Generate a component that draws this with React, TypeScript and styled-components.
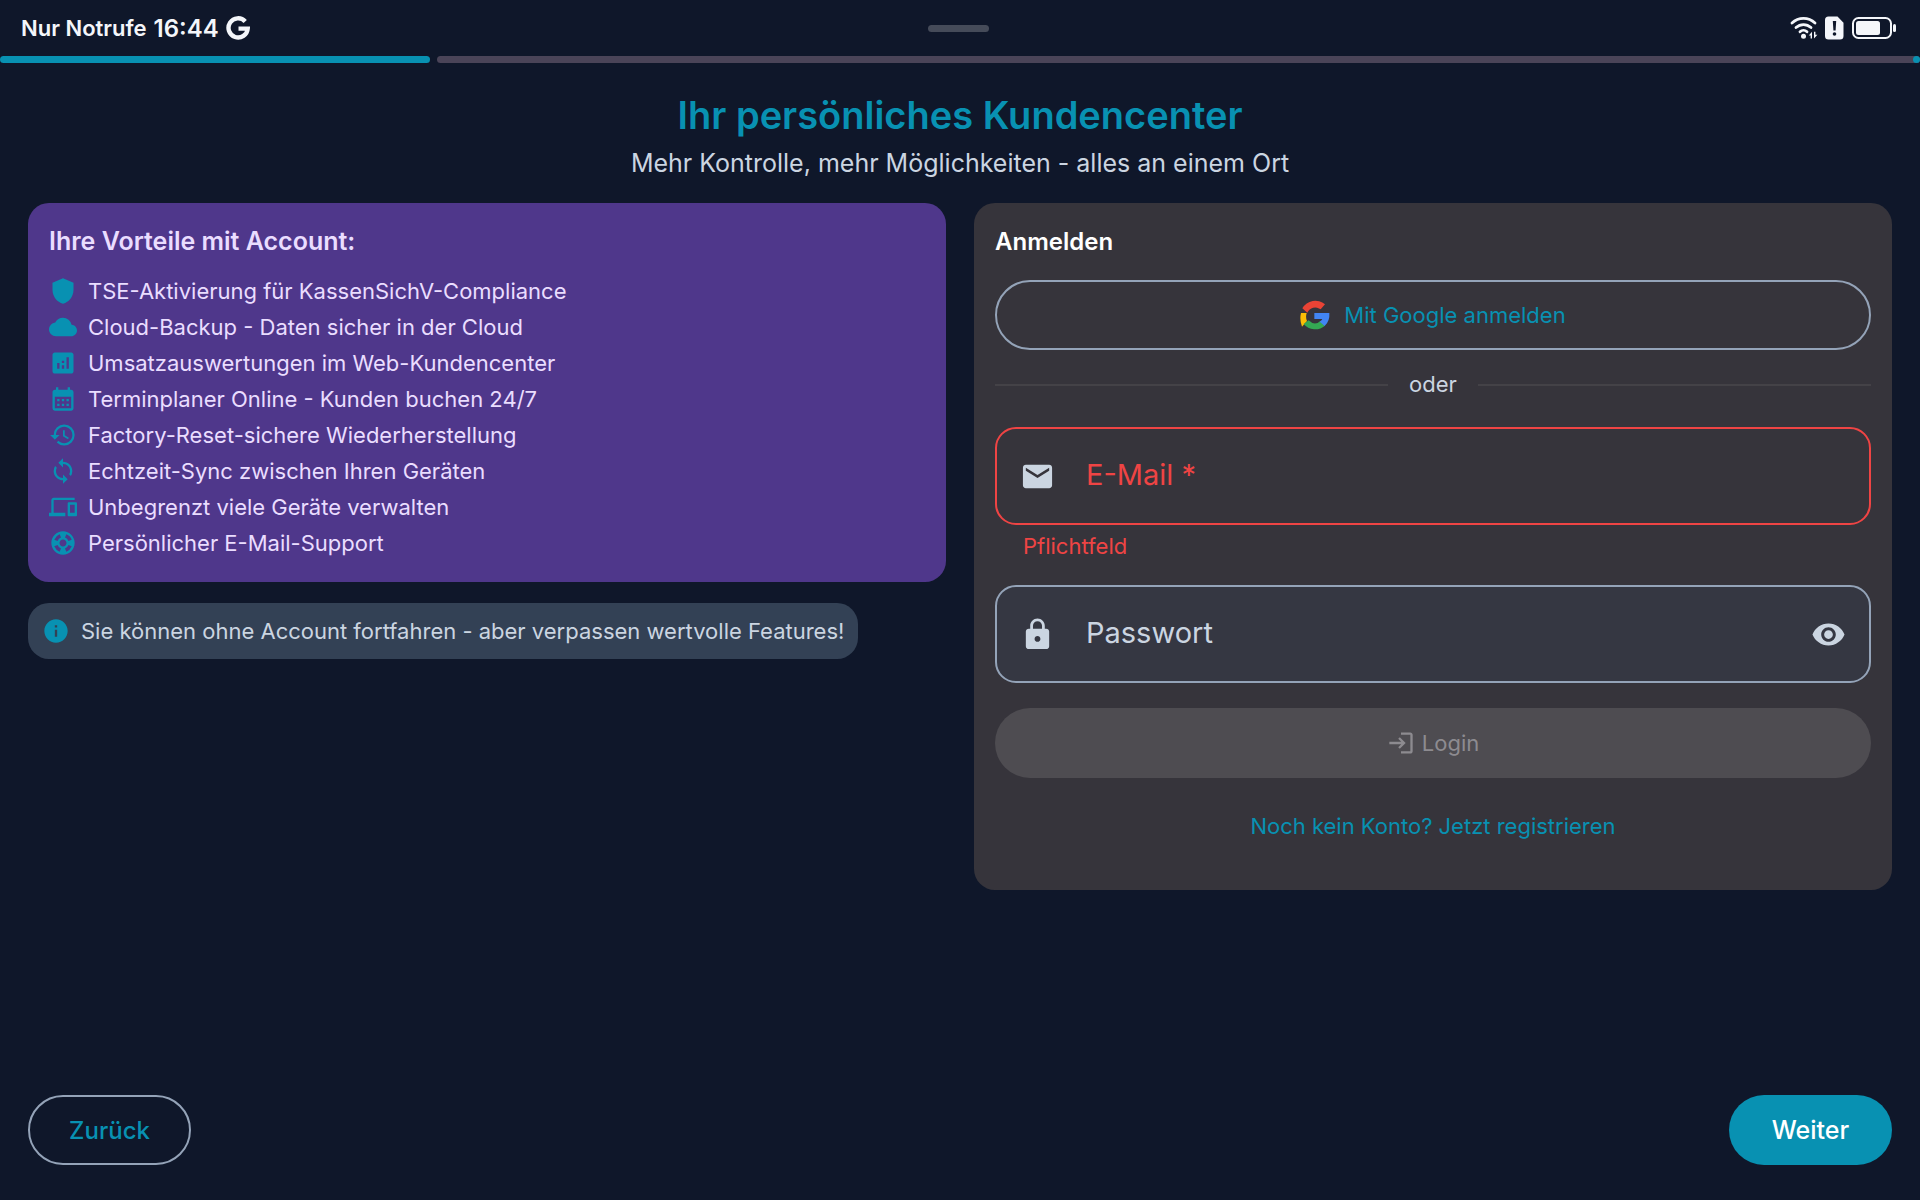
import React, { useState } from "react";
import styled, { createGlobalStyle } from "styled-components";
import {
  MdShield, MdCloud, MdAnalytics, MdCalendarMonth, MdHistory, MdSync, MdDevices,
  MdSupport, MdInfo, MdEmail, MdLock, MdVisibility, MdLogin,
} from "react-icons/md";

const color = {
  bg: "#0f172a",
  primary: "#0891b2",
  purple: "#4f378b",
  onPurple: "#eaddff",
  card: "#36343b",
  text: "#cbd5e1",
  outline: "#94a3b8",
  slate: "#334155",
  error: "#ef4444",
  track: "#4a4458",
};

const GlobalStyle = createGlobalStyle`
  * { box-sizing: border-box; }
  body {
    margin: 0;
    background: ${color.bg};
    font-family: "Inter", "Noto Sans", sans-serif;
    color: ${color.text};
  }
  h1, h2, p, ul { margin: 0; padding: 0; }
  button, input { font: inherit; }
  svg { display: block; flex: none; }
`;

const Page = styled.div`
  min-height: 100vh;
  display: flex;
  flex-direction: column;
`;

const StatusBar = styled.header`
  display: grid;
  grid-template-columns: 1fr auto 1fr;
  align-items: center;
  height: 56px;
  padding: 0 24px 0 21px;
  color: #f4f6fa;
  font-size: 22px;
  font-weight: 600;
`;

const StatusGroup = styled.div<{ $end?: boolean }>`
  display: flex;
  align-items: center;
  gap: 7px;
  justify-content: ${(p) => (p.$end ? "flex-end" : "flex-start")};
`;

const Clock = styled.span`
  font-size: 24px;
`;

const Handle = styled.div`
  width: 61px;
  height: 7px;
  border-radius: 4px;
  background: #454b59;
`;

const Progress = styled.div`
  display: flex;
  gap: 7px;
  height: 7px;
`;

const ProgressDone = styled.div`
  border-radius: 4px;
  background: ${color.primary};
`;

const ProgressRest = styled.div`
  flex: 1;
  display: flex;
  justify-content: flex-end;
  border-radius: 4px;
  background: ${color.track};
`;

const ProgressStop = styled.span`
  width: 7px;
  height: 7px;
  border-radius: 50%;
  background: ${color.primary};
`;

const Main = styled.main`
  flex: 1;
  padding: 28px 28px 0;
`;

const Intro = styled.div`
  text-align: center;
  margin-bottom: 19px;
`;

const Title = styled.h1`
  font-size: 38px;
  line-height: 48px;
  font-weight: 600;
  color: ${color.primary};
`;

const Subtitle = styled.p`
  font-size: 25px;
  line-height: 42px;
  margin-top: 3px;
`;

const Columns = styled.div`
  display: grid;
  grid-template-columns: 1fr 1fr;
  gap: 28px;
  align-items: start;
`;

const Column = styled.div`
  display: flex;
  flex-direction: column;
  align-items: flex-start;
  gap: 21px;
`;

const Card = styled.section<{ $tone: "purple" | "surface" }>`
  width: 100%;
  padding: 21px;
  border-radius: 21px;
  background: ${(p) => (p.$tone === "purple" ? color.purple : color.card)};
  color: ${(p) => (p.$tone === "purple" ? color.onPurple : color.text)};
`;

const CardTitle = styled.h2<{ $bright?: boolean }>`
  font-size: ${(p) => (p.$bright ? "24px" : "25px")};
  line-height: 35px;
  font-weight: 600;
  margin-bottom: ${(p) => (p.$bright ? "21px" : "14px")};
  color: ${(p) => (p.$bright ? "#ffffff" : "inherit")};
`;

const Benefits = styled.ul`
  list-style: none;
`;

const Benefit = styled.li`
  display: flex;
  align-items: center;
  gap: 11px;
  height: 36px;
  font-size: 22px;
  line-height: 28px;

  svg { color: ${color.primary}; }
`;

const Notice = styled.p`
  display: flex;
  align-items: center;
  gap: 11px;
  padding: 14px;
  border-radius: 21px;
  background: ${color.slate};
  font-size: 22px;
  line-height: 28px;

  svg { color: ${color.primary}; }
`;

const Button = styled.button<{ $kind: "outlined" | "filled"; $wide?: boolean }>`
  display: flex;
  align-items: center;
  justify-content: center;
  width: ${(p) => (p.$wide ? "100%" : "auto")};
  min-width: 163px;
  height: 70px;
  padding: 0 39px;
  border-radius: 35px;
  border: 2px solid ${(p) => (p.$kind === "outlined" ? color.outline : "transparent")};
  background: ${(p) => (p.$kind === "outlined" ? "transparent" : color.primary)};
  background-clip: border-box;
  background-origin: border-box;
  color: ${(p) => (p.$kind === "outlined" ? color.primary : "#ffffff")};
  font-size: ${(p) => (p.$wide ? "22px" : p.$kind === "outlined" ? "24px" : "25px")};
  font-weight: ${(p) => (p.$wide ? 400 : 500)};
  gap: ${(p) => (p.$kind === "outlined" ? "14px" : "7px")};
  cursor: pointer;

  &:disabled {
    background: #4e4c51;
    color: #8d8b90;
    cursor: default;
  }
`;

const Divider = styled.div`
  display: flex;
  align-items: center;
  gap: 21px;
  margin: 14px 0 22px;
  font-size: 22px;
  line-height: 41px;

  &::before,
  &::after {
    content: "";
    flex: 1;
    height: 2px;
    background: #444247;
  }
`;

const Field = styled.div<{ $error?: boolean }>`
  display: flex;
  align-items: center;
  height: 98px;
  padding: 0 23px;
  border: 2px solid ${(p) => (p.$error ? color.error : color.outline)};
  border-radius: 21px;
  background: ${(p) => (p.$error ? "transparent" : "#353742")};
`;

const FieldLabel = styled.label<{ $error?: boolean }>`
  margin-left: 31px;
  padding-bottom: 4px;
  font-size: 29px;
  color: ${(p) => (p.$error ? color.error : color.text)};
`;

const FieldInput = styled.input`
  flex: 1;
  min-width: 0;
  height: 100%;
  margin-left: 14px;
  padding: 0;
  border: 0;
  outline: 0;
  background: transparent;
  color: ${color.text};
  font-size: 29px;
`;

const IconButton = styled.button`
  padding: 0;
  border: 0;
  background: none;
  color: inherit;
  cursor: pointer;
`;

const Hint = styled.p`
  padding: 4px 28px 0;
  margin-bottom: 22px;
  font-size: 22px;
  line-height: 34px;
  color: ${color.error};
`;

const Actions = styled.div`
  display: flex;
  flex-direction: column;
  align-items: center;
  gap: 28px;
  padding: 25px 0 23px;
`;

const RegisterLink = styled.a`
  font-size: 22px;
  line-height: 40px;
  color: ${color.primary};
  text-decoration: none;
`;

const Footer = styled.footer`
  display: flex;
  justify-content: space-between;
  padding: 28px 28px 35px;
`;

const GoogleMono = () => (
  <svg width="24" height="24" viewBox="0 0 24 24" fill="none" stroke="currentColor" strokeWidth="4.4" aria-hidden="true">
    <path d="M19.2 5.4A9.6 9.6 0 1 0 21.7 12.6H12.5" />
  </svg>
);

const GoogleColor = () => (
  <svg width="30" height="32" viewBox="0 0 90 96" aria-hidden="true">
    <path fill="#ea4335" d="M7 28A45 45 0 0 1 75 16L62 31A26 26 0 0 0 22 41Z" />
    <path fill="#fbbc05" d="M3 42H20Q16 55 21 66L6 83Q-2 62 3 42Z" />
    <path fill="#34a853" d="M11 75L26 64Q44 82 61 66L75 80A45 45 0 0 1 11 75Z" />
    <path fill="#4285f4" d="M43 42H88Q90 66 74 81L59 68Q66 64 67 60H43Z" />
  </svg>
);

const WifiIcon = () => (
  <svg width="28" height="24" viewBox="0 0 28 24" fill="none" stroke="currentColor" strokeWidth="2.8" strokeLinecap="round" aria-hidden="true">
    <path d="M2 7C8.5.8 18.5.8 25 7" />
    <path d="M6 11.600c4.400-4.100 10.600-4.100 15 0" />
    <path d="M10 15.800c2-1.900 5-1.900 7 0" />
    <circle cx="13.500" cy="20.300" r="2.500" fill="currentColor" stroke="none" />
    <path d="M22 15.800V22.500h-1.400V19.600H18.800zM24 15.800h1.400v2.900h2L24 22.500z" fill="currentColor" stroke="none" />
  </svg>
);

const SimIcon = () => (
  <svg width="19" height="24" viewBox="0 0 19 24" aria-hidden="true">
    <path fill="currentColor" d="M3.5.5h9l6 6.200V20a3.500 3.500 0 0 1-3.500 3.500H3.500A3.500 3.500 0 0 1 0 20V4A3.500 3.500 0 0 1 3.500.5z" />
    <path fill={color.bg} d="M7.800 5h3.400l-.6 9.500H8.400z" />
    <circle cx="9.500" cy="18" r="1.800" fill={color.bg} />
  </svg>
);

const BatteryIcon = () => (
  <svg width="45" height="24" viewBox="0 0 45 24" aria-hidden="true">
    <rect x="2" y="2" width="38" height="20" rx="5.500" fill="none" stroke="currentColor" strokeWidth="2" />
    <rect x="5" y="5" width="24" height="14" rx="2.500" fill="currentColor" />
    <rect x="42" y="8" width="3" height="8" rx="1.500" fill="currentColor" />
  </svg>
);

const benefits = [
  { icon: MdShield, text: "TSE-Aktivierung für KassenSichV-Compliance" },
  { icon: MdCloud, text: "Cloud-Backup - Daten sicher in der Cloud" },
  { icon: MdAnalytics, text: "Umsatzauswertungen im Web-Kundencenter" },
  { icon: MdCalendarMonth, text: "Terminplaner Online - Kunden buchen 24/7" },
  { icon: MdHistory, text: "Factory-Reset-sichere Wiederherstellung" },
  { icon: MdSync, text: "Echtzeit-Sync zwischen Ihren Geräten" },
  { icon: MdDevices, text: "Unbegrenzt viele Geräte verwalten" },
  { icon: MdSupport, text: "Persönlicher E-Mail-Support" },
];

export default function App() {
  const [email, setEmail] = useState("");
  const [password, setPassword] = useState("");
  const [visible, setVisible] = useState(false);
  const progress = 22.4;

  return (
    <Page>
      <GlobalStyle />
      <StatusBar>
        <StatusGroup>
          <span>Nur Notrufe</span>
          <Clock>16:44</Clock>
          <GoogleMono />
        </StatusGroup>
        <Handle />
        <StatusGroup $end>
          <WifiIcon />
          <SimIcon />
          <BatteryIcon />
        </StatusGroup>
      </StatusBar>
      <Progress>
        <ProgressDone style={{ width: `${progress}%` }} />
        <ProgressRest>
          <ProgressStop />
        </ProgressRest>
      </Progress>

      <Main>
        <Intro>
          <Title>Ihr persönliches Kundencenter</Title>
          <Subtitle>Mehr Kontrolle, mehr Möglichkeiten - alles an einem Ort</Subtitle>
        </Intro>
        <Columns>
          <Column>
            <Card $tone="purple">
              <CardTitle>Ihre Vorteile mit Account:</CardTitle>
              <Benefits>
                {benefits.map(({ icon: Icon, text }) => (
                  <Benefit key={text}>
                    <Icon size={28} aria-hidden="true" />
                    {text}
                  </Benefit>
                ))}
              </Benefits>
            </Card>
            <Notice>
              <MdInfo size={28} aria-hidden="true" />
              Sie können ohne Account fortfahren - aber verpassen wertvolle Features!
            </Notice>
          </Column>

          <Card $tone="surface">
            <CardTitle $bright>Anmelden</CardTitle>
            <Button type="button" $kind="outlined" $wide>
              <GoogleColor />
              Mit Google anmelden
            </Button>
            <Divider>oder</Divider>
            <Field $error>
              <MdEmail size={35} aria-hidden="true" />
              <FieldLabel htmlFor="email" $error>E-Mail *</FieldLabel>
              <FieldInput id="email" type="email" value={email} onChange={(e) => setEmail(e.target.value)} />
            </Field>
            <Hint>Pflichtfeld</Hint>
            <Field>
              <MdLock size={35} aria-hidden="true" />
              <FieldLabel htmlFor="password">Passwort</FieldLabel>
              <FieldInput
                id="password"
                type={visible ? "text" : "password"}
                value={password}
                onChange={(e) => setPassword(e.target.value)}
              />
              <IconButton type="button" aria-label="Passwort anzeigen" onClick={() => setVisible(!visible)}>
                <MdVisibility size={35} />
              </IconButton>
            </Field>
            <Actions>
              <Button type="submit" $kind="filled" $wide disabled={!email || !password}>
                <MdLogin size={28} aria-hidden="true" />
                Login
              </Button>
              <RegisterLink href="#registrieren">Noch kein Konto? Jetzt registrieren</RegisterLink>
            </Actions>
          </Card>
        </Columns>
      </Main>

      <Footer>
        <Button type="button" $kind="outlined">Zurück</Button>
        <Button type="button" $kind="filled">Weiter</Button>
      </Footer>
    </Page>
  );
}
